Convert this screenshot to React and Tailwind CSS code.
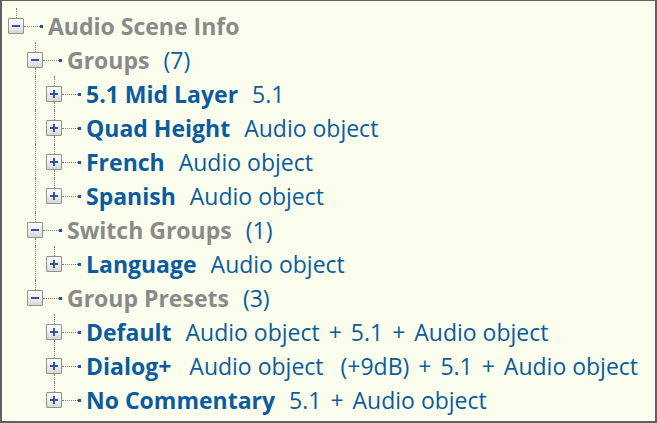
import React from "react";

const GRAY = "gray";
const BLUE = "blue";

const rows = [
  { name: "Audio Scene Info", tone: GRAY, expanded: true, next: false, guides: [] },
  { name: "Groups", desc: "(7)", tone: GRAY, expanded: true, next: true, guides: [false] },
  { name: "5.1 Mid Layer", desc: "5.1", tone: BLUE, expanded: false, next: true, guides: [false, true] },
  { name: "Quad Height", desc: "Audio object", tone: BLUE, expanded: false, next: true, guides: [false, true] },
  { name: "French", desc: "Audio object", tone: BLUE, expanded: false, next: true, guides: [false, true] },
  { name: "Spanish", desc: "Audio object", tone: BLUE, expanded: false, next: false, guides: [false, true] },
  { name: "Switch Groups", desc: "(1)", tone: GRAY, expanded: true, next: true, guides: [false] },
  { name: "Language", desc: "Audio object", tone: BLUE, expanded: false, next: false, guides: [false, true] },
  { name: "Group Presets", desc: "(3)", tone: GRAY, expanded: true, next: false, guides: [false] },
  { name: "Default", desc: "Audio object + 5.1 + Audio object", tone: BLUE, expanded: false, next: true, guides: [false, false] },
  { name: "Dialog+", desc: "Audio object  (+9dB) + 5.1 + Audio object", wide: true, tone: BLUE, expanded: false, next: true, guides: [false, false] },
  { name: "No Commentary", desc: "5.1 + Audio object", tone: BLUE, expanded: false, next: false, guides: [false, false] },
];

function Expander({ expanded }) {
  return (
    <div className="relative w-[16px] h-[16px] shrink-0 border border-[#929292] rounded-[1px] bg-gradient-to-b from-[#fdfdfd] via-[#f0f0f0] to-[#d6d6d6] flex items-center justify-center">
      <div className="w-[8px] h-[2px] bg-[#33549a]" />
      {!expanded && (
        <div className="absolute left-[6px] top-[3px] w-[2px] h-[8px] bg-[#33549a]" />
      )}
    </div>
  );
}

function Desc({ text, wide }) {
  const parts = text.split(" + ");
  return (
    <span className={(wide ? "ml-[18px]" : "ml-[14px]") + " text-[#0c5b9d]"}>
      {parts.map((p, i) => {
        const m = p.split("  ");
        return (
          <React.Fragment key={i}>
            {i > 0 && <span className="mx-[3px]"> + </span>}
            {m.map((q, j) => (
              <React.Fragment key={j}>
                {j > 0 && <span className="ml-[5px]">  </span>}
                {q}
              </React.Fragment>
            ))}
          </React.Fragment>
        );
      })}
    </span>
  );
}

function Row({ row }) {
  return (
    <div className="flex h-[34px]">
      {row.guides.map((g, i) => (
        <div key={i} className="w-[19px] shrink-0 flex">
          {g && <div className="ml-[8px] h-full border-l border-dotted border-[#7c7c7c]" />}
        </div>
      ))}
      <div className="flex flex-col w-[16px] shrink-0">
        <div className="h-[10px] ml-[8px] border-l border-dotted border-[#7c7c7c]" />
        <Expander expanded={row.expanded} />
        {row.next && <div className="flex-1 ml-[8px] border-l border-dotted border-[#7c7c7c]" />}
      </div>
      <div className="w-[16px] shrink-0 mt-[18px] h-0 border-t border-dotted border-[#7c7c7c]" />
      <div className="w-[3px] h-[3px] mt-[17px] shrink-0 bg-[#11599a]" />
      <div className="ml-[5px] flex items-center h-[34px] pt-[2px] whitespace-pre text-[23px] leading-none">
        <span
          className={
            row.tone === GRAY
              ? "font-bold text-[#8a8a8a]"
              : "font-bold text-[#0c5b9d]"
          }
        >
          {row.name}
        </span>
        {row.desc && <Desc text={row.desc} wide={row.wide} />}
      </div>
    </div>
  );
}

export default function App() {
  return (
    <div
      className="w-[657px] h-[423px] bg-[#fbfeec] border-t border-l-2 border-r-2 border-b-2 border-[#606060] pl-[6px] pt-[7px] overflow-hidden"
      style={{ fontFamily: '"Open Sans", "Noto Sans", sans-serif' }}
    >
      {rows.map((r, i) => (
        <Row key={i} row={r} />
      ))}
    </div>
  );
}
